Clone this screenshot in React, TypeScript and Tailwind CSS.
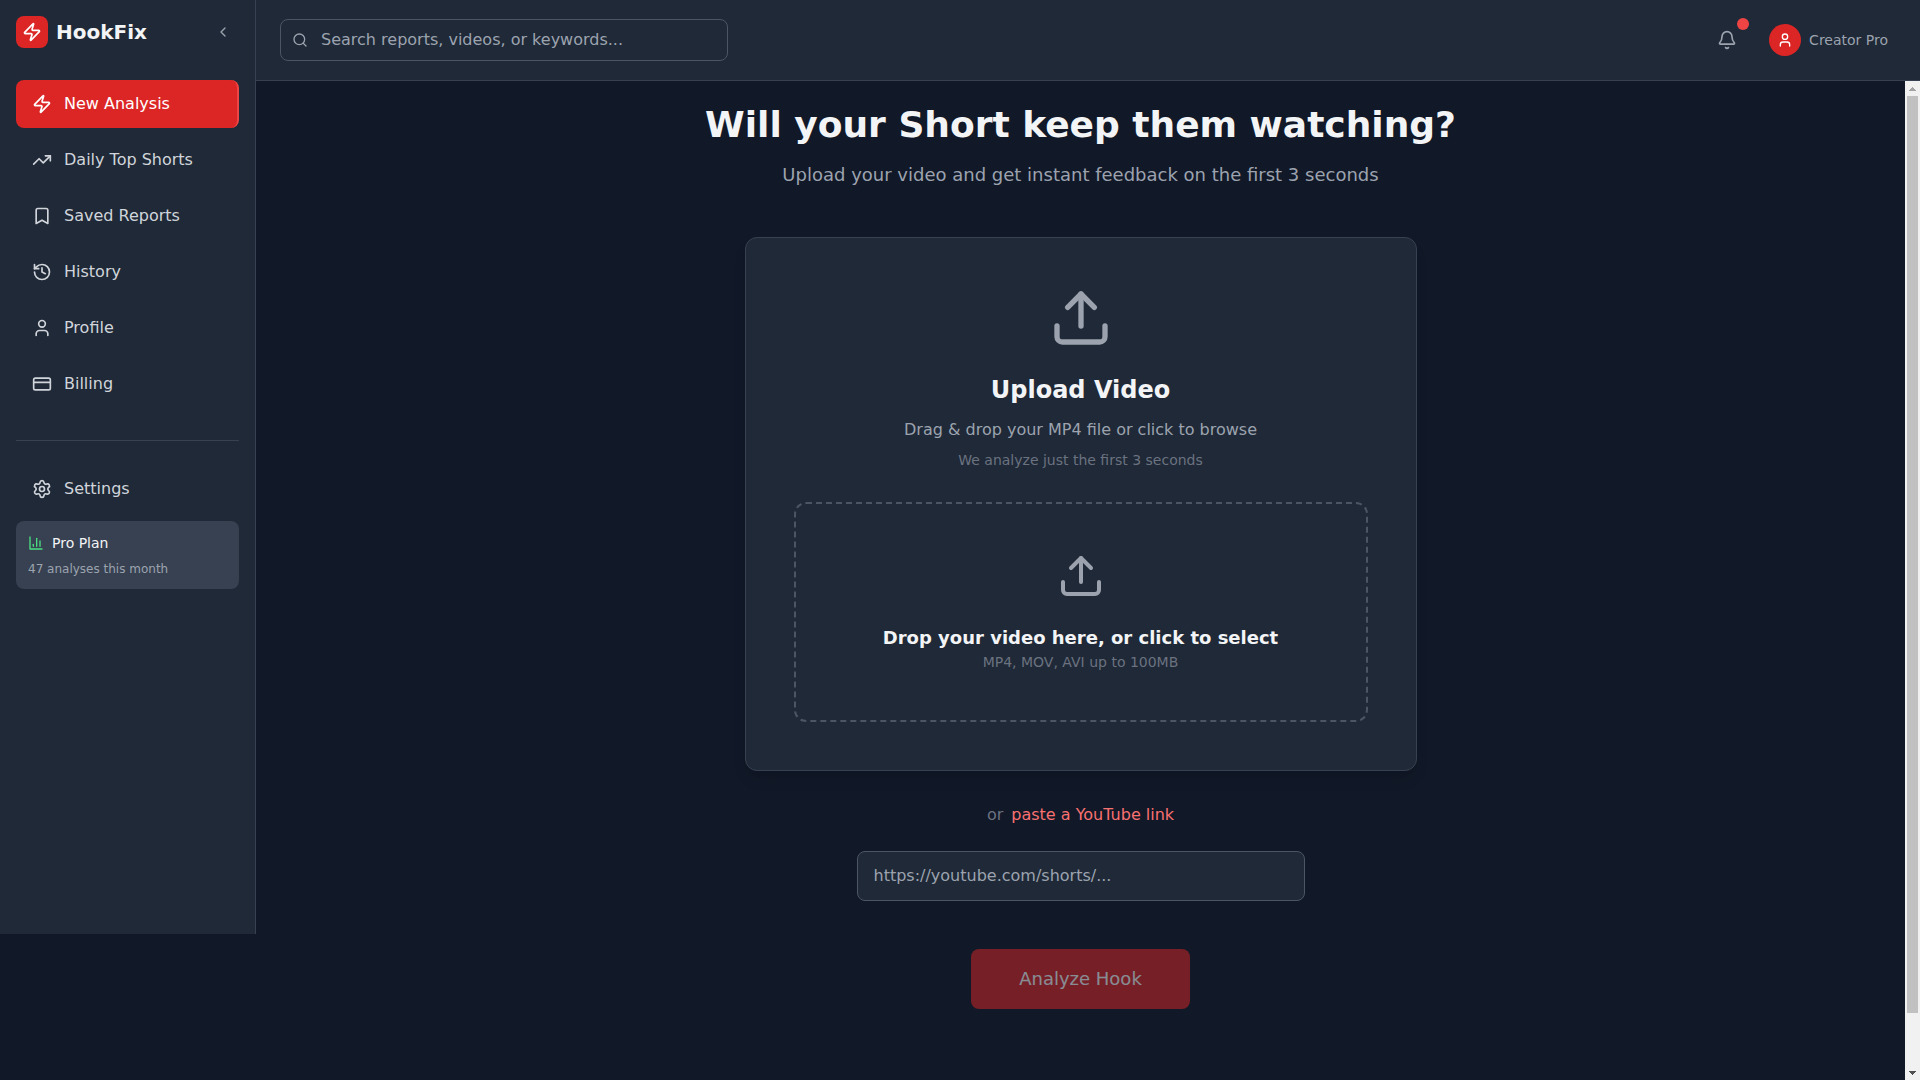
import { useRef, useState } from "react";
import {
  Bell,
  Bookmark,
  ChevronLeft,
  CreditCard,
  History,
  Search,
  Settings,
  TrendingUp,
  Upload,
  User,
  Zap,
} from "lucide-react";

const navItems = [
  { label: "New Analysis", icon: Zap },
  { label: "Daily Top Shorts", icon: TrendingUp },
  { label: "Saved Reports", icon: Bookmark },
  { label: "History", icon: History },
  { label: "Profile", icon: User },
  { label: "Billing", icon: CreditCard },
];

const ChartIcon = () => (
  <svg
    viewBox="0 0 24 24"
    fill="none"
    stroke="currentColor"
    strokeWidth="2"
    strokeLinecap="round"
    strokeLinejoin="round"
    className="size-4 text-[#4ade80]"
    aria-hidden="true"
  >
    <path d="M3 3v18h18" />
    <path d="M18 17V9" />
    <path d="M13 17V5" />
    <path d="M8 17v-3" />
  </svg>
);

const Sidebar = () => {
  const [active, setActive] = useState<string>("New Analysis");

  return (
    <aside className="mb-[146px] w-64 shrink-0 border-r border-[#374151] bg-[#1f2937]">
      {/* LOGO */}
      <div className="flex items-center justify-between p-4">
        <div className="flex items-center gap-2">
          <div className="flex size-8 items-center justify-center rounded-lg bg-[#dc2626]">
            <Zap className="size-5 text-white" />
          </div>
          <span className="text-xl font-bold text-[#f3f4f6]">HookFix</span>
        </div>
        <button aria-label="Collapse sidebar" className="rounded-lg p-2 text-[#9ca3af] hover:bg-[#374151]">
          <ChevronLeft className="size-4" />
        </button>
      </div>

      {/* NAV */}
      <nav className="flex flex-col gap-2 p-4">
        {navItems.map(({ label, icon: Icon }) => (
          <button
            key={label}
            onClick={() => setActive(label)}
            className={`flex items-center gap-3 rounded-lg px-4 py-3 text-left ${
              active === label
                ? "border-r-2 border-[#ef4444] bg-[#dc2626] text-white"
                : "text-[#d1d5db] hover:bg-[#374151]"
            }`}
          >
            <Icon className="size-5" />
            <span>{label}</span>
          </button>
        ))}
      </nav>

      <div className="mx-4 mt-4 flex flex-col gap-2 border-t border-[#374151] pt-6">
        <button className="flex items-center gap-3 rounded-lg px-4 py-3 text-left text-[#d1d5db] hover:bg-[#374151]">
          <Settings className="size-5" />
          <span>Settings</span>
        </button>
        <div className="rounded-lg bg-[#374151] p-3">
          <div className="flex items-center gap-2">
            <ChartIcon />
            <span className="text-sm text-[#f3f4f6]">Pro Plan</span>
          </div>
          <p className="mt-2 text-xs text-[#9ca3af]">47 analyses this month</p>
        </div>
      </div>
    </aside>
  );
};

const TopBar = () => (
  <header className="flex items-center justify-between border-b border-[#374151] bg-[#1f2937] px-6 py-4">
    <div className="relative w-full max-w-md">
      <Search className="absolute top-1/2 left-3 size-4 -translate-y-1/2 text-[#9ca3af]" />
      <input
        type="text"
        aria-label="Search"
        placeholder="Search reports, videos, or keywords..."
        className="block w-full rounded-lg border border-[#4b5563] py-2 pr-4 pl-10 text-[#f3f4f6] placeholder:text-[#9ca3af]"
      />
    </div>
    <div className="flex items-center gap-4">
      <button aria-label="Notifications" className="relative p-2 text-[#9ca3af]">
        <Bell className="size-5" />
        <span className="absolute -top-1 -right-1 size-3 rounded-full bg-[#ef4444]"></span>
      </button>
      <button className="flex items-center gap-2 p-2">
        <span className="flex size-8 items-center justify-center rounded-full bg-[#dc2626]">
          <User className="size-4 text-white" />
        </span>
        <span className="text-sm text-[#9ca3af]">Creator Pro</span>
      </button>
    </div>
  </header>
);

const UploadCard = () => (
  <section className="w-full max-w-2xl rounded-xl border border-[#374151] bg-[#1f2937] p-12 text-center shadow-lg">
    <Upload className="mx-auto size-16 text-[#9ca3af]" />
    <h2 className="mt-6 text-2xl font-semibold text-[#f3f4f6]">Upload Video</h2>
    <p className="mt-3 text-[#9ca3af]">Drag &amp; drop your MP4 file or click to browse</p>
    <p className="mt-2 text-sm text-[#6b7280]">We analyze just the first 3 seconds</p>

    <label className="mt-8 block cursor-pointer rounded-xl border-2 border-dashed border-[#4b5563] p-12">
      <input type="file" accept="video/*" className="sr-only" />
      <Upload className="mx-auto size-12 text-[#9ca3af]" />
      <span className="mt-6 block text-lg font-semibold text-[#f3f4f6]">
        Drop your video here, or click to select
      </span>
      <span className="block text-sm text-[#6b7280]">MP4, MOV, AVI up to 100MB</span>
    </label>
  </section>
);

type ScrollBarProps = {
  onScroll: (amount: number) => void;
};

const ScrollBar = ({ onScroll }: ScrollBarProps) => (
  <div className="flex w-[15px] shrink-0 flex-col bg-[#f1f1f1]">
    <button
      aria-label="Scroll up"
      onClick={() => onScroll(-40)}
      className="flex h-[15px] items-center justify-center text-[#a3a3a3]"
    >
      <svg viewBox="0 0 7 4" className="h-1 w-[7px]" fill="currentColor" shapeRendering="crispEdges">
        <path d="M3 0h1v1h1v1h1v1h1v1H0V3h1V2h1V1h1z" />
      </svg>
    </button>
    <div className="flex-1 px-[2px]">
      <div className="h-[94.6%] bg-[#c1c1c1]"></div>
    </div>
    <button
      aria-label="Scroll down"
      onClick={() => onScroll(40)}
      className="flex h-[15px] items-center justify-center text-[#505050]"
    >
      <svg viewBox="0 0 7 4" className="h-1 w-[7px]" fill="currentColor" shapeRendering="crispEdges">
        <path d="M0 0h7v1H6v1H5v1H4v1H3V3H2V2H1V1H0z" />
      </svg>
    </button>
  </div>
);

const App = () => {
  const [url, setUrl] = useState<string>("");
  const mainRef = useRef<HTMLElement>(null);

  return (
    <div className="flex h-screen bg-[#111827] font-['DejaVu_Sans',sans-serif]">
      <Sidebar />
      <div className="flex min-w-0 flex-1 flex-col">
        <TopBar />
        <div className="flex min-h-0 flex-1">
          <main ref={mainRef} className="min-w-0 flex-1 overflow-y-auto [scrollbar-width:none]">
            <div className="flex flex-col items-center px-6 pt-6 pb-32">
              <h1 className="text-4xl font-bold text-[#f3f4f6]">Will your Short keep them watching?</h1>
              <p className="mt-4 mb-12 text-lg text-[#9ca3af]">
                Upload your video and get instant feedback on the first 3 seconds
              </p>

              <UploadCard />

              {/* YOUTUBE LINK */}
              <div className="mt-8 flex gap-2">
                <span className="text-[#6b7280]">or</span>
                <button className="text-[#f87171]">paste a YouTube link</button>
              </div>
              <input
                type="url"
                aria-label="YouTube link"
                value={url}
                onChange={(e) => setUrl(e.target.value)}
                placeholder="https://youtube.com/shorts/..."
                className="mt-6 w-full max-w-md rounded-lg border border-[#4b5563] bg-[#1f2937] px-4 py-3 text-[#f3f4f6] placeholder:text-[#9ca3af]"
              />

              <button
                disabled={!url}
                className="mt-12 rounded-lg bg-[#dc2626] px-12 py-4 text-lg font-medium text-white disabled:opacity-50"
              >
                Analyze Hook
              </button>
            </div>
          </main>
          <ScrollBar onScroll={(amount) => mainRef.current?.scrollBy({ top: amount })} />
        </div>
      </div>
    </div>
  );
};

export default App;
